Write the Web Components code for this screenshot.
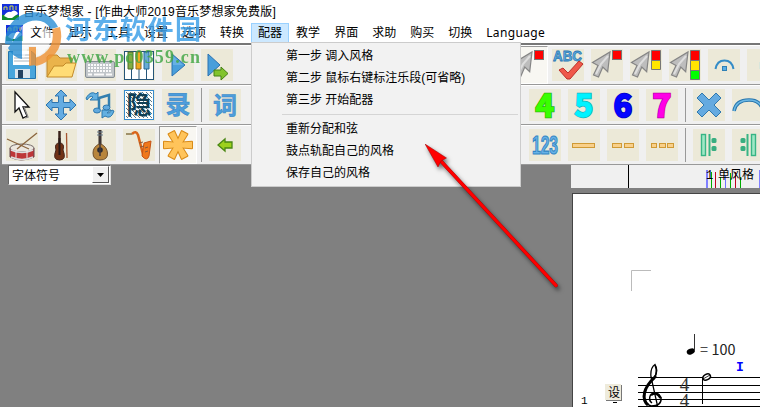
<!DOCTYPE html>
<html lang="zh-CN">
<head>
<meta charset="utf-8">
<title>音乐梦想家</title>
<style>
body { margin: 0; font: 12px/16px "Liberation Sans", "Noto Sans CJK SC", sans-serif; color: #000; }
</style>
</head>
<body>
<music-app></music-app>

<script>
// one 32x32 drawing for each button
const CURSOR = '<path d="M19 3 L16.700 22.700 L11.800 18 L7.500 28 L2.500 26 L7 16.500 L1.500 13.500 Z" fill="#bdbdbd" stroke="#858585" stroke-width="1.2"/><path d="M17 7 L10 15 L5 25" stroke="#dedede" stroke-width="2" fill="none"/>';
const REPEAT = '<rect x="8.5" y="5.500" width="4" height="21" fill="#a0e8c5" stroke="#38b585" stroke-width="1.4"/><path d="M16.500 5V27" stroke="#38b585" stroke-width="2"/><rect x="18.500" y="9" width="5" height="5" rx="1.500" fill="#38ae80"/><rect x="18.500" y="17" width="5" height="5" rx="1.500" fill="#38ae80"/>';
const CURVED = '<path d="M2 9 Q7 1 12 5 L14 3 V11 H6 L9 8 Q6 6 3 11Z"/>';
const ARMS = [0, 62, 118, 180, 242, 298].map((a) => `<path d="M0 -2.300L14 -3.200V3.200L0 2.300Z" transform="translate(16 16) rotate(${a})"/>`).join('');

function glyph(t, color, edge, size, y, width) {
  return `<text x="16" y="${y}" text-anchor="middle" font-family="'Noto Sans CJK SC', sans-serif" font-size="${size}" font-weight="700" fill="${color}" stroke="${edge}" stroke-width="${width || .5}">${t}</text>`;
}

function digit(t, color, edge) {
  return glyph(t, color, edge, 31, 27.5, 2.6) + glyph(t, color, color, 31, 27.5, 1.2);
}

function bars(list) {
  return list.map(([x, w]) => `<rect x="${x}.5" y="14.500" width="${w}" height="4" fill="#f9d08a" stroke="#cf9a36"/>`).join('');
}

const ICONS = {
  save: '<path d="M2.500 2.500H26L29.500 6V29.500H2.500Z" fill="#48a5dc" stroke="#2474ad"/><path d="M7 2H25V16H7Z" fill="#fff"/><path d="M8 6H24M8 9H24M8 12H24" stroke="#aab4bd"/><path d="M9 20H24V29H9Z" fill="#dce5ed"/><path d="M12 21H17V29H12Z" fill="#244160"/>',
  open: '<path d="M2 28V8L4 6H12L15 9H27V14" fill="#eab34b" stroke="#bd852c"/><path d="M2 28L9 17H18L21 14H31L27 28Z" fill="#ffdc76" stroke="#c38a28"/>',
  keys: '<path d="M14 13V8Q14 5 18 6" fill="none" stroke="#88929a"/><rect x="1.500" y="12.500" width="29" height="16" rx="1.500" fill="#c0c5c9" stroke="#868e94"/><path d="M4 16H28M4 19H28M4 22H28" stroke="#fafafa" stroke-width="2" stroke-dasharray="2 1"/><path d="M4 25.500H8M10 25.500H20M22 25.500H28" stroke="#fafafa" stroke-width="2"/>',
  piano: '<rect x="1.500" y="2.500" width="29" height="28" fill="#fff" stroke="#255579"/><path d="M8.500 3V30M16 3V30M23.500 3V30" stroke="#255579"/><path d="M5 3H10V20H5Z" fill="#83ad43" stroke="#4e6d2d"/><path d="M13 3H18V20H13Z" fill="#f0a91d" stroke="#9a681c"/><path d="M21 3H26V20H21Z" fill="#67abd7" stroke="#296896"/>',
  play: '<path d="M10 5L23 16L10 27Z" fill="#499fdb" stroke="#2d73b1"/><path d="M11 7V16H21Z" fill="#79bce9" opacity=".6"/>',
  playnext: '<path d="M7 5L19 16L7 27Z" fill="#499fdb" stroke="#2d73b1"/><path d="M13 21H20V18L27 24.500L20 31V27H13Z" fill="#82c32c" stroke="#458015"/>',
  pick: '<path d="M9 3V23L13 19L17 29L21 27L17 18H23Z" fill="#fff" stroke="#111" stroke-width="1.300"/><path d="M18 18L22 28L19 29" fill="none" stroke="#888" stroke-width="1.300"/>',
  move: '<path d="M16 1L22 7H18.500V13.500H25V10L31 16L25 22V18.500H18.500V25H22L16 31L10 25H13.500V18.500H7V22L1 16L7 10V13.500H13.500V7H10Z" fill="#64ace2" stroke="#2e75ae"/>',
  loop: `<g fill="#63b0e1" stroke="#2d78ae">${CURVED}<path d="M30 22Q27 31 21 27L18 29V21H27L23 24Q26 25 28 21Z"/></g><path d="M15 21V9L25 6V18" fill="none" stroke="#337faf" stroke-width="2.500"/><ellipse cx="13" cy="21.500" rx="3.500" ry="2.500" fill="#62aade" stroke="#2d78ae"/><ellipse cx="22.500" cy="18.500" rx="3.500" ry="2.500" fill="#62aade" stroke="#2d78ae"/>`,
  hide: `<defs><pattern id="h" width="4" height="4" patternUnits="userSpaceOnUse"><path d="M-1 -1L5 5M-1 3L1 5M3 -1L5 1" stroke="#164054" stroke-width=".7"/></pattern></defs><rect x="1.500" y="1.500" width="29" height="29" fill="#fff" stroke="#378acc"/><rect x="3" y="3" width="26" height="26" fill="url(#h)"/><text x="16" y="25" text-anchor="middle" font-family="'Noto Sans CJK SC', sans-serif" font-size="25" font-weight="700" fill="#103f55">隐</text>`,
  record: glyph('录', '#4d9edc', '#3685c5', 25, 25),
  lyric: glyph('词', '#4d9edc', '#3685c5', 24, 25),
  drum: '<path d="M4 19V28Q15 34 28 28V19" fill="#bd3638" stroke="#64444a"/><ellipse cx="16" cy="19" rx="12" ry="4" fill="#ece7df" stroke="#776d6c"/><path d="M5 21Q16 26 27 21M5 28Q16 33 27 28" fill="none" stroke="#ddd" stroke-width="1.500"/><path d="M10 22V29M21 22V29" stroke="#eee"/><path d="M1 10L23 20M31 4L11 20" stroke="#8b653e" stroke-width="1.300"/>',
  violin: '<path d="M14.500 2V18" stroke="#392119" stroke-width="2.500"/><path d="M14.500 14Q9 14 11 21Q7 31 14.500 31Q22 31 18 21Q20 14 14.500 14Z" fill="#713216" stroke="#45251b"/><path d="M14.500 9V26" stroke="#291916" stroke-width="2"/><path d="M21.500 4L22 29" stroke="#a65631" stroke-width="1.300"/>',
  mandolin: '<path d="M16 1V21" stroke="#372c29" stroke-width="3"/><path d="M15 15Q9 18 9 24Q9 31 16 31Q24 31 23.500 24Q23 18 17 15Z" fill="#b8853c" stroke="#70502d"/><circle cx="16" cy="21" r="2.800" fill="#292a32"/><path d="M16 3V27" stroke="#403738" stroke-width="1.500"/><path d="M13 3H19M13 6H19" stroke="#64798b"/>',
  sax: '<path d="M9 5Q13 1 15 6L20 25Q22 30 24 25V15" fill="none" stroke="#d9651a" stroke-width="2.500"/><path d="M21 14L28 12L26 27Q24 33 19 27Z" fill="#f0781c" stroke="#c65317"/><path d="M3 5H9" stroke="#98865d" stroke-width="1.800"/><path d="M16 14L20 13M17 18L21 17M22 19L25 18M22 23L25 22" stroke="#8a5a3a"/>',
  star: `<g stroke="#d98b17" stroke-width="2" stroke-linejoin="round">${ARMS}</g><g fill="#ffc45b">${ARMS}</g>`,
  back: '<path d="M23 13V19H16V22L9 16L16 10V13Z" fill="#9dd11d" stroke="#498713" stroke-width="1.300"/>',
  redpick: `${CURSOR}<rect x="21.500" y="1.500" width="9" height="9" fill="#f00" stroke="#777"/>`,
  yellowpick: `${CURSOR}<path d="M21.500 1.500H30.500V11.500H21.500Z" fill="#f00" stroke="#777"/><path d="M21.500 11.500H30.500V20.500H21.500Z" fill="#ffe500" stroke="#777"/>`,
  greenpick: `${CURSOR}<path d="M21.500 1.500H30.500V11.500H21.500Z" fill="#f00" stroke="#777"/><path d="M21.500 11.500H30.500V21.500H21.500Z" fill="#ffe500" stroke="#777"/><path d="M21.500 21.500H30.500V30.500H21.500Z" fill="#0f0" stroke="#777"/>`,
  check: '<text x="1" y="11.500" textLength="29" lengthAdjust="spacingAndGlyphs" font-family="\'Liberation Sans\', sans-serif" font-size="14" font-weight="bold" fill="#65afe3" stroke="#2877b3" stroke-width=".8">ABC</text><path d="M7 21L11 19L16 24L27 12L31 15L18 30H15Z" fill="#ef584a" stroke="#bc302a"/>',
  fermata: '<path d="M7.500 20Q9 11.500 16.500 11.500Q24 11.500 25.500 20" fill="none" stroke="#348cc7" stroke-width="2"/><rect x="14.500" y="17.500" width="4" height="4" fill="#5baee5" stroke="#2e80b5"/>',
  dot: '<rect x="12" y="13" width="8" height="7" fill="#d9e6dc"/>',
  n4: digit('4', '#3aff00', '#2bb010'),
  n5: digit('5', '#00f3ff', '#17b0b8'),
  n6: digit('6', '#0505ff', '#0202ba'),
  n7: digit('7', '#ff00e6', '#b800a4'),
  cross: '<path d="M4 9L9 4L16 11L23 4L28 9L21 16L28 23L23 28L16 21L9 28L4 23L11 16Z" fill="#65aae0" stroke="#2f78ae"/>',
  slur: '<path d="M2 22Q4 11 17 11Q29 11 31 22" fill="none" stroke="#2876ad" stroke-width="3.500"/><path d="M2 22Q4 11 17 11Q29 11 31 22" fill="none" stroke="#6cb8e5" stroke-width="1.500"/>',
  n123: '<text x="3" y="25" textLength="26" lengthAdjust="spacingAndGlyphs" font-family="\'Liberation Sans\', sans-serif" font-size="25" font-weight="bold" fill="#67b2e7" stroke="#3386c4" stroke-width="1.2">123</text>',
  bar1: bars([[4, 22]]),
  bar2: bars([[5, 9], [17, 9]]),
  bar3: bars([[5, 5], [13, 6], [21, 6]]),
  repeatstart: REPEAT,
  repeatend: `<g transform="matrix(-1 0 0 1 32 0)">${REPEAT}</g>`
};

function define(name, html, setup) {
  customElements.define(name, class extends HTMLElement {
    connectedCallback() {
      const shadow = this.attachShadow({mode: 'open'});
      shadow.innerHTML = html;
      if (setup) setup(this, shadow);
    }
  });
}

define('app-icon', `
  <style>:host{display:block;width:17px;height:17px} svg{display:block}</style>
  <svg width="17" height="17" viewBox="0 0 17 17">
    <path d="M0 1H17V17H0Z" fill="#1430dc"/><path d="M0 12Q3 11 6 13L17 12V17H0Z" fill="#118b30"/>
    <path d="M2 13Q5 8 9 9Q12 6 15 9Q17 11 14 12L10 15H6Z" fill="#fff"/>
    <path d="M2 7V4H5V7M8 7V3H11V7M14 7V3" fill="none" stroke="#d3dc4d"/>
  </svg>`);

define('title-bar', `
  <style>:host{display:flex;align-items:center;height:22px;padding-left:2px;gap:4px;background:#fff;white-space:nowrap}
  span{padding-top:1px;letter-spacing:.19px}</style>
  <app-icon></app-icon><span><slot></slot></span>`);

define('menu-item', `
  <style>:host{display:block;box-sizing:border-box;height:20px;padding:0 6px;border:1px solid transparent;line-height:18px}
  :host([open]){background:#cce8ff;border-color:#99d1ff}</style><slot></slot>`);

define('menu-bar', `
  <style>:host{display:flex;align-items:center;height:21px;padding-left:6px;background:#fff;white-space:nowrap}
  menu-item[wide]{font-family:"Noto Sans",sans-serif;letter-spacing:.35px}</style>
  <app-icon></app-icon>
  <menu-item>文件</menu-item><menu-item>显示</menu-item><menu-item>工具</menu-item><menu-item>设置</menu-item>
  <menu-item>选项</menu-item><menu-item>转换</menu-item><menu-item open>配器</menu-item><menu-item>教学</menu-item>
  <menu-item>界面</menu-item><menu-item>求助</menu-item><menu-item>购买</menu-item><menu-item>切换</menu-item>
  <menu-item wide>Language</menu-item>`);

define('tool-button', `
  <style>:host{display:block;flex:none;width:32px;height:32px;background:#ece9d8}
  :host([pressed]){margin:-3px;padding:2px;border:1px solid;border-color:#999 #fff #fff #999;background:#f8f7f2}
  svg{display:block}</style>
  <svg width="32" height="32" viewBox="0 0 32 32"></svg>`,
  (el, shadow) => { shadow.querySelector('svg').innerHTML = ICONS[el.getAttribute('icon')]; });

define('tool-row', `
  <style>:host{display:flex;box-sizing:border-box;height:40px;padding:4px 0 0 4px;gap:7px;overflow:hidden;background:#f0f0f0;border-bottom:1px solid #999;box-shadow:inset 0 1px #fff}
  ::slotted(i){flex:none;width:1px;height:34px;margin-top:-1px;background:#999}</style><slot></slot>`,
  (el) => {
    // "|" is a separator, a number is free room, "*" marks the pressed button
    el.getAttribute('tools').split(' ').forEach((t) => {
      if (t === '|') return el.append(document.createElement('i'));
      if (/^\d+$/.test(t)) {
        const gap = document.createElement('div');
        gap.style.flex = `0 0 ${t}px`;
        return el.append(gap);
      }
      const button = document.createElement('tool-button');
      button.setAttribute('icon', t.replace('*', ''));
      button.toggleAttribute('pressed', t.endsWith('*'));
      el.append(button);
    });
  });

define('tool-panel', `
  <style>:host{display:block;box-sizing:border-box;height:122px;border-left:2px solid #858585;border-top:2px solid #777;background:#f0f0f0}</style>
  <tool-row tools="save open keys piano play playnext 266 redpick* check redpick yellowpick greenpick fermata dot"></tool-row>
  <tool-row tools="pick move loop hide record | lyric 274 n4 n5 n6 n7 | cross slur"></tool-row>
  <tool-row tools="drum violin mandolin sax star* | back 274 n123 bar1 bar2 bar3 | repeatstart repeatend"></tool-row>`);

define('combo-box', `
  <style>:host{display:flex;box-sizing:border-box;width:103px;height:20px;padding-left:3px;background:#fff;border:1px solid;border-color:#666 #ddd #ddd #666;line-height:20px}
  span{flex:1} b{box-sizing:border-box;width:17px;height:17px;background:#f0f0f0;border:1px solid;border-color:#fff #555 #555 #fff;display:grid;place-items:center;margin-right:1px;line-height:0}</style>
  <span><slot></slot></span><b><svg width="7" height="4"><path d="M0 0H7L3.500 4Z"/></svg></b>`);

define('style-ruler', `
  <style>:host{display:flex;height:23px;background:#f0f0f0;overflow:hidden} svg{display:block}</style>
  <svg width="189" height="23">
    <path d="M57.500 0V23" stroke="#000"/>
    <path d="M136 5V23M189 5V23" stroke="#8080ff" stroke-width="2"/>
    <path d="M140.500 7V23M149.500 12V23M159.500 8V23M169.500 12V23" stroke="#0a0"/>
    <path d="M144.500 7V23M164.500 7V23" stroke="#c00020"/><path d="M154.500 11V23" stroke="#7070ff"/>
    <text x="135" y="14" font-family="'Liberation Mono', monospace" font-size="12">1</text>
    <text x="147" y="14" font-size="12">单风格</text>
  </svg>`);

define('score-page', `
  <style>:host{display:block;margin:5px 0 0 1px;height:213px;border:solid #444;border-width:1px 0 0 1px;background:#fff;overflow:hidden} svg{display:block}</style>
  <svg width="187" height="213" viewBox="573 194 187 213">
    <path d="M631.500 291V270.500H651" fill="none" stroke="#bbb"/>
    <ellipse cx="690.800" cy="351.500" rx="4.200" ry="2.800" transform="rotate(-20 690.800 351.500)"/><path d="M694.500 351V334" stroke="#333"/>
    <g font-family="'Noto Sans CJK SC', sans-serif" fill="#222"><text x="700" y="355" font-weight="300" font-size="15">=</text>
    <text x="711.500" y="355" textLength="24" lengthAdjust="spacingAndGlyphs" font-size="14">100</text></g>
    <text x="736" y="371" font-family="'Liberation Mono', monospace" font-weight="bold" font-size="13" fill="#00f">I</text>
    <path d="M638 377.500H760M638 385.500H760M638 392.500H760M638 399.500H760M638 406.500H760" stroke="#000"/>
    <path d="M658 408L651 377Q650 368 655 364.500Q659 371 654 378" fill="none" stroke="#000" stroke-width="1.300"/>
    <path d="M655 365Q658 372 654 379Q644 387 643.500 396Q643.500 403 651 406Q662 406 661 397.500Q657 390 650.500 395Q648 400 652 403" fill="none" stroke="#000" stroke-width="1.500"/>
    <path d="M656 376Q646 385 644.500 393Q643 401 648 405" fill="none" stroke="#000" stroke-width="3"/>
    <path d="M651 395Q657 391 660.500 398" fill="none" stroke="#000" stroke-width="2.500"/>
    <g font-family="'Liberation Serif', serif" font-size="19" text-anchor="middle" fill="#333"><text x="684.500" y="391">4</text><text x="684.500" y="407">4</text></g>
    <path d="M702.500 378V404" stroke="#000"/><ellipse cx="706.700" cy="377" rx="4" ry="2.700" transform="rotate(-30 706.700 377)" fill="#fff" stroke="#000" stroke-width="1.500"/><path d="M703 379L710 375" stroke="#000" stroke-width=".8"/>
    <text x="581" y="404" font-family="'Liberation Mono', monospace" font-size="11">1</text>
    <path d="M606 385H622V401H606Z" fill="#777"/><path d="M605 384H621V400H605Z" fill="#eeebdc"/>
    <text x="608" y="397" font-family="'Noto Sans CJK SC', sans-serif" font-size="12">设</text><path d="M613 402.500H617" stroke="#000"/>
  </svg>`);

define('drop-menu', `
  <style>:host{display:block;box-sizing:border-box;width:270px;height:145px;padding:2px;background:#f2f2f2;border:1px solid #ccc}
  div{height:22px;padding-left:32px;line-height:22px;white-space:nowrap}
  hr{margin:3px 0 3px 28px;border:0;border-top:1px solid #d5d5d5}</style>
  <div>第一步 调入风格</div><div>第二步 鼠标右键标注乐段(可省略)</div><div>第三步 开始配器</div>
  <hr>
  <div>重新分配和弦</div><div>鼓点轨配自己的风格</div><div>保存自己的风格</div>`);

define('site-mark', `
  <style>:host{display:block} svg{display:block}</style>
  <svg width="205" height="75">
    <g opacity=".8">
      <path d="M5 44Q5 20 27 13Q49 9 58 27L51 29Q43 17 28 22Q14 28 12 45Z" fill="#298ed5"/>
      <path d="M60 27Q65 47 50 59Q43 65 35 66V58Q46 55 51 45Q54 37 52 29Z" fill="#f09234"/>
      <path d="M21 27Q28 21 35 22L31 38H40L43 28L51 30Q53 45 43 53L36 57V45H29L24 58L18 54Z" fill="#fff" opacity=".75"/>
      <path d="M8 48L22 29V59Q12 57 8 48Z" fill="#258bd2"/><path d="M29 47H36V65L29 66Z" fill="#f09234"/>
    </g>
    <text x="65" y="39" textLength="136" font-family="'Noto Sans CJK SC', sans-serif" font-weight="700" font-size="26" fill="#3c9fe8" opacity=".83">河东软件园</text>
    <text x="67" y="63" textLength="133" font-family="'Liberation Serif', serif" font-weight="bold" font-size="18" fill="#43a746" opacity=".83">www.pc0359.cn</text>
  </svg>`);

define('red-arrow', `
  <style>:host{display:block} svg{display:block;filter:drop-shadow(2px 3px 2px rgba(0,0,0,.55))}</style>
  <svg width="145" height="155"><path d="M14 15L131 141.500" stroke="#a00" stroke-width="3.600" stroke-linecap="round"/><path d="M14 15L131 141.500" stroke="#f00" stroke-width="2.800" stroke-linecap="round"/><path d="M0 0L21.500 14L16 17L13 23Z" fill="#f00" stroke="#900" stroke-width=".5"/></svg>`);

define('music-app', `
  <style>
  :host{display:block;position:relative;width:760px;height:407px;overflow:hidden;background:#808080}
  main{display:grid;grid-template-columns:1fr 189px;height:242px}
  combo-box{margin:0 0 0 8px}
  drop-menu{position:absolute;left:251px;top:42px}
  red-arrow{position:absolute;left:425px;top:144px}
  site-mark{position:absolute;left:0;top:0}
  </style>
  <title-bar>音乐梦想家 - [作曲大师2019音乐梦想家免费版]</title-bar>
  <menu-bar></menu-bar>
  <tool-panel></tool-panel>
  <main>
    <combo-box>字体符号</combo-box>
    <section><style-ruler></style-ruler><score-page></score-page></section>
  </main>
  <drop-menu></drop-menu>
  <site-mark></site-mark>
  <red-arrow></red-arrow>`);
</script>
</body>
</html>
